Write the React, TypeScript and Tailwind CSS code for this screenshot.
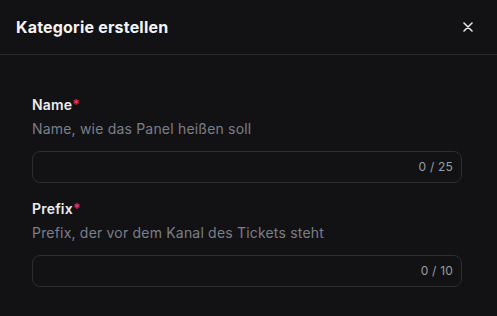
import React from 'react';

interface FieldProps {
  label: string;
  hint: string;
  max: number;
}

const Field: React.FC<FieldProps> = ({ label, hint, max }) => {
  return (
    <div className="flex flex-col">
      <label className="text-[14px] leading-5 font-semibold text-[#ececee]">
        {label}
        <span className="text-[#e5366b]">*</span>
      </label>
      <p className="mt-1 text-[14px] leading-5 text-[#7b7f89]">{hint}</p>
      <div className="mt-3 flex h-8 items-center justify-end rounded-lg border border-[#2c2c31] pr-2">
        <span className="text-[12px] text-[#9a9da6]">0 / {max}</span>
      </div>
    </div>
  );
};

const App: React.FC = () => {
  return (
    <div
      className="flex h-[316px] w-[497px] flex-col bg-[#121214] tracking-[0.012em]"
      style={{ fontFamily: 'Inter, "Noto Sans", sans-serif' }}
    >
      <div className="flex h-[55px] items-center justify-between border-b border-[#2a2a2e] pl-4 pr-6">
        <h2 className="text-[16px] font-bold text-[#f4f4f5]">Kategorie erstellen</h2>
        <button className="text-[#e4e4e7]">
          <svg width="10" height="10" viewBox="0 0 10 10" fill="none" stroke="currentColor" strokeWidth="1.6" strokeLinecap="round">
            <path d="M1 1l8 8M9 1L1 9" />
          </svg>
        </button>
      </div>
      <div className="flex flex-col gap-4 pl-8 pr-[35px] pt-10">
        <Field label="Name" hint="Name, wie das Panel heißen soll" max={25} />
        <Field label="Prefix" hint="Prefix, der vor dem Kanal des Tickets steht" max={10} />
      </div>
    </div>
  );
};

export default App;
